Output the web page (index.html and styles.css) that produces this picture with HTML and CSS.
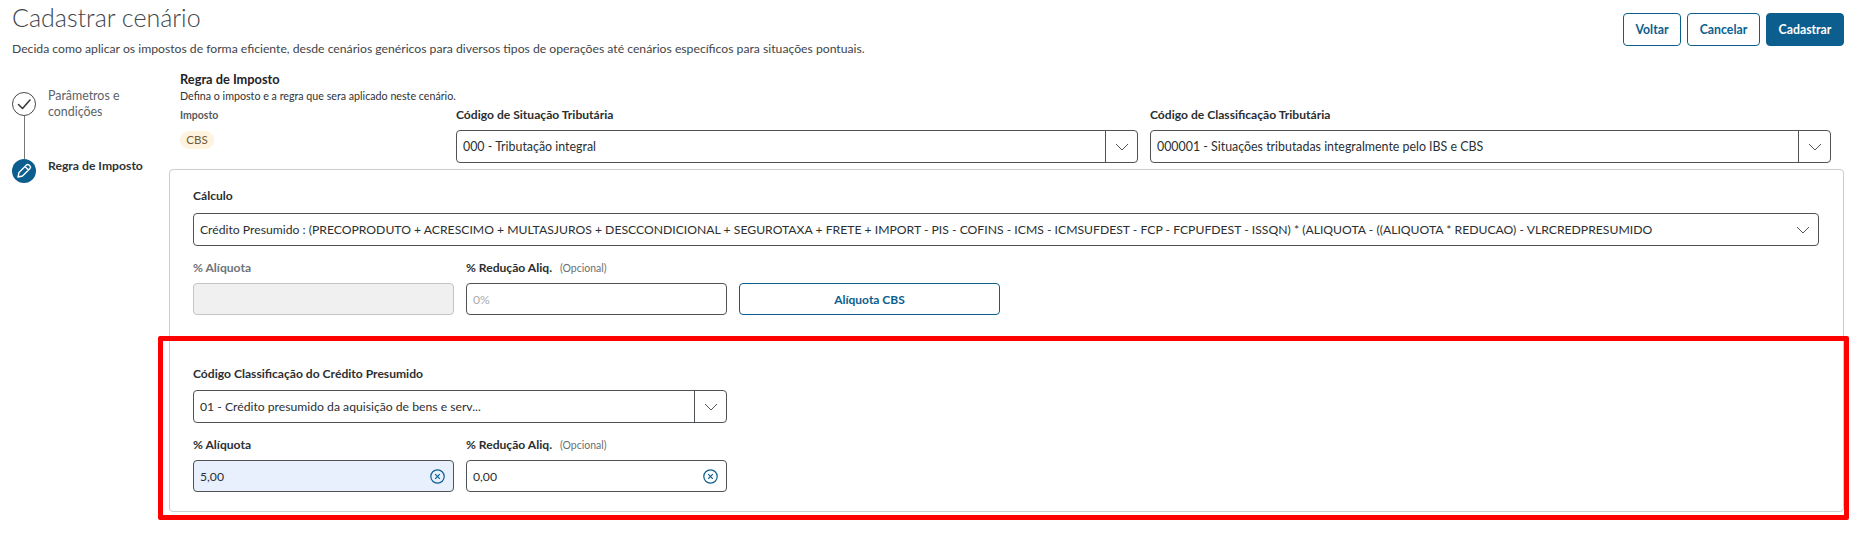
FILE: index.html
```html
<!DOCTYPE html>
<html lang="pt-BR">
<head>
<meta charset="utf-8">
<title>Cadastrar cenário</title>
<link rel="stylesheet" href="styles.css">
</head>
<body>
<header class="page-head">
  <div class="head-text">
    <h1 class="title">Cadastrar cenário</h1>
    <p class="subtitle">Decida como aplicar os impostos de forma eficiente, desde cenários genéricos para diversos tipos de operações até cenários específicos para situações pontuais.</p>
  </div>
  <div class="actions">
    <button class="btn btn-voltar">Voltar</button>
    <button class="btn btn-cancelar">Cancelar</button>
    <button class="btn btn-primary">Cadastrar</button>
  </div>
</header>
<div class="content">
  <nav class="stepper">
    <div class="step step-done">
      <div class="step-rail">
        <span class="step-circle">
          <svg width="24" height="24" viewBox="0 0 24 24"><circle cx="12" cy="12" r="11.5" fill="none" stroke="#4a4a4a"/><path d="M6.5 12.5l4 4 7.5-8.5" fill="none" stroke="#3a3a3a" stroke-width="1.6" stroke-linecap="round" stroke-linejoin="round"/></svg>
        </span>
        <span class="step-line"></span>
      </div>
      <span class="step-label">Parâmetros e condições</span>
    </div>
    <div class="step step-active">
      <div class="step-rail">
        <span class="step-circle">
          <svg width="24" height="24" viewBox="0 0 24 24"><circle cx="12" cy="12" r="12" fill="#0b5e8e"/><path d="M6 18l1-4.5 7.5-7.5a1.7 1.7 0 0 1 2.4 0l1.1 1.1a1.7 1.7 0 0 1 0 2.4L10.5 17z M13 7.5l3.5 3.5" fill="none" stroke="#fff" stroke-width="1.4" stroke-linejoin="round"/></svg>
        </span>
      </div>
      <span class="step-label">Regra de Imposto</span>
    </div>
  </nav>
  <main class="main">
    <h2 class="section-title">Regra de Imposto</h2>
    <p class="section-desc">Defina o imposto e a regra que sera aplicado neste cenário.</p>
    <div class="top-row">
      <div class="tax-col">
        <span class="tax-label">Imposto</span>
        <span class="badge">CBS</span>
      </div>
      <div class="field">
        <label class="label label-strong">Código de Situação Tributária</label>
        <div class="select">
          <span class="select-value value-top">000 - Tributação integral</span>
          <span class="select-arrow"><svg width="16" height="16" viewBox="0 0 16 16"><path d="M2 5l6 6 6-6" fill="none" stroke="#555" stroke-width="1"/></svg></span>
        </div>
      </div>
      <div class="field">
        <label class="label label-strong">Código de Classificação Tributária</label>
        <div class="select">
          <span class="select-value value-top">000001 - Situações tributadas integralmente pelo IBS e CBS</span>
          <span class="select-arrow"><svg width="16" height="16" viewBox="0 0 16 16"><path d="M2 5l6 6 6-6" fill="none" stroke="#555" stroke-width="1"/></svg></span>
        </div>
      </div>
    </div>
    <section class="panel">
      <label class="label label-strong">Cálculo</label>
      <div class="select select-formula">
        <span class="select-value">Crédito Presumido : (PRECOPRODUTO + ACRESCIMO + MULTASJUROS + DESCCONDICIONAL + SEGUROTAXA + FRETE + IMPORT - PIS - COFINS - ICMS - ICMSUFDEST - FCP - FCPUFDEST - ISSQN) * (ALIQUOTA - ((ALIQUOTA * REDUCAO) - VLRCREDPRESUMIDO</span>
        <span class="formula-arrow"><svg width="16" height="16" viewBox="0 0 16 16"><path d="M2 5l6 6 6-6" fill="none" stroke="#555" stroke-width="1"/></svg></span>
      </div>
      <div class="rate-grid rate-grid-a">
        <div class="rate-field">
          <label class="label label-muted">% Alíquota</label>
          <div class="input input-disabled"></div>
        </div>
        <div class="rate-field">
          <label class="label label-strong">% Redução Aliq. <small class="optional">(Opcional)</small></label>
          <div class="input"><span class="placeholder">0%</span></div>
        </div>
        <button class="btn-rate">Alíquota CBS</button>
      </div>
      <div class="credit">
        <label class="label label-strong">Código Classificação do Crédito Presumido</label>
        <div class="select select-credit">
          <span class="select-value">01 - Crédito presumido da aquisição de bens e serv...</span>
          <span class="select-arrow"><svg width="16" height="16" viewBox="0 0 16 16"><path d="M2 5l6 6 6-6" fill="none" stroke="#555" stroke-width="1"/></svg></span>
        </div>
        <div class="rate-grid rate-grid-b">
          <div class="rate-field">
            <label class="label label-strong">% Alíquota</label>
            <div class="input input-filled">
              <span class="input-value">5,00</span>
              <svg class="clear" width="15" height="15" viewBox="0 0 15 15"><circle cx="7.5" cy="7.5" r="6.7" fill="none" stroke="#0b5e8e" stroke-width="1.2"/><path d="M5.2 5.2l4.6 4.6M9.8 5.2l-4.6 4.6" stroke="#0b5e8e" stroke-width="1.2"/></svg>
            </div>
          </div>
          <div class="rate-field">
            <label class="label label-strong">% Redução Aliq. <small class="optional">(Opcional)</small></label>
            <div class="input">
              <span class="input-value">0,00</span>
              <svg class="clear" width="15" height="15" viewBox="0 0 15 15"><circle cx="7.5" cy="7.5" r="6.7" fill="none" stroke="#0b5e8e" stroke-width="1.2"/><path d="M5.2 5.2l4.6 4.6M9.8 5.2l-4.6 4.6" stroke="#0b5e8e" stroke-width="1.2"/></svg>
            </div>
          </div>
        </div>
      </div>
    </section>
  </main>
</div>
<div class="highlight"></div>
</body>
</html>
```

FILE: styles.css
```css
* { box-sizing: border-box; }
html, body { margin: 0; padding: 0; }
body {
  position: relative;
  width: 1849px;
  height: 545px;
  overflow: hidden;
  background: #fff;
  color: #1f2326;
  font-family: Lato, "Open Sans", sans-serif;
  font-size: 12px;
}
.page-head {
  display: flex;
  justify-content: space-between;
  align-items: flex-start;
  height: 70px;
  padding: 0 5px 0 12px;
}
.title {
  margin: 0;
  font-size: 25px;
  line-height: 35px;
  font-weight: 300;
  color: #3d464c;
}
.subtitle {
  margin: 6px 0 0;
  font-size: 12.2px;
  line-height: 16px;
  color: #3f4448;
}
.actions { display: flex; gap: 6px; padding-top: 13px; }
.btn {
  height: 33px;
  padding: 0;
  border: 1px solid #0b5e8e;
  border-radius: 4px;
  background: #fff;
  color: #0b5e8e;
  font: 700 12.3px Lato, sans-serif;
}
.btn-voltar { width: 58px; }
.btn-cancelar { width: 73px; }
.btn-primary { width: 78px; background: #0b5e8e; color: #fff; font-weight: 700; }
.content { display: flex; }
.stepper { width: 180px; flex: none; padding: 22px 0 0 12px; }
.step { display: flex; gap: 12px; }
.step-rail { display: flex; flex-direction: column; align-items: center; width: 24px; }
.step-circle { display: block; width: 24px; height: 24px; }
.step-line { display: block; width: 1px; height: 43px; background: #777; }
.step-label { width: 80px; font-size: 12.4px; line-height: 16px; color: #5c6266; margin-top: -4px; }
.step-active .step-label { color: #2f3336; font-size: 12.2px; font-weight: 700; margin-top: -1px; white-space: nowrap; }
.main { flex: 1; min-width: 0; padding-right: 5px; }
.section-title { margin: 0; font-size: 12.8px; line-height: 18px; font-weight: 700; color: #1f2326; }
.section-desc { margin: 0 0 2px; font-size: 10.7px; line-height: 16px; color: #2f3336; }
.top-row { display: grid; grid-template-columns: 276px 682px 693px; }
.tax-col { display: flex; flex-direction: column; align-items: flex-start; }
.tax-label { font-size: 10.5px; font-weight: 700; line-height: 18px; color: #565b5f; }
.badge {
  margin-top: 7px;
  width: 34px;
  height: 18px;
  border-radius: 9px;
  background: #fdf3df;
  color: #6f5a33;
  font-size: 11.5px;
  line-height: 18px;
  text-align: center;
}
.top-row .field { display: flex; flex-direction: column; }
.top-row .field + .field { margin-left: 12px; }
.label { display: block; font-size: 12.1px; line-height: 18px; }
.label-strong { font-weight: 700; color: #2b2f32; }
.label-muted { font-weight: 700; color: #6f7478; }
.optional { font-size: 10.5px; font-weight: 400; color: #6a6f73; margin-left: 5px; }
.select {
  display: flex;
  align-items: center;
  height: 33px;
  margin-top: 6px;
  border: 1px solid #4f5356;
  border-radius: 4px;
  background: #fff;
}
.select-value {
  flex: 1;
  padding-left: 6px;
  font-size: 12.2px;
  white-space: nowrap;
  overflow: hidden;
  color: #2b2f32;
}
.value-top { font-size: 12.4px; }
.select-arrow {
  display: flex;
  align-items: center;
  justify-content: center;
  flex: none;
  width: 32px;
  align-self: stretch;
  border-left: 1px solid #4f5356;
}
.formula-arrow { display: flex; flex: none; width: 23px; }
.panel {
  margin-top: 6px;
  margin-left: -11px;
  height: 343px;
  padding: 17px 24px 0 23px;
  border: 1px solid #ccc;
  border-radius: 4px;
}
.select-formula { margin-top: 8px; width: 1626px; }
.rate-grid { display: flex; gap: 12px; }
.rate-grid-a { margin-top: 13px; align-items: flex-end; }
.rate-grid-b { margin-top: 13px; }
.rate-field { width: 261px; }
.input {
  display: flex;
  align-items: center;
  justify-content: space-between;
  height: 32px;
  margin-top: 6px;
  padding: 0 8px 0 6px;
  border: 1px solid #4f5356;
  border-radius: 4px;
  background: #fff;
}
.input-disabled { background: #f0f0f0; border-color: #c4c4c4; }
.input-filled { background: #e8f0fe; }
.placeholder { font-size: 12.2px; color: #a9adb0; }
.input-value { font-size: 12.2px; color: #2b2f32; }
.clear { flex: none; }
.btn-rate {
  width: 261px;
  height: 32px;
  padding: 0;
  border: 1px solid #0b5e8e;
  border-radius: 4px;
  background: #fff;
  color: #0b5e8e;
  font: 700 12px Lato, sans-serif;
}
.credit { margin-top: 50px; width: 534px; }
.select-credit { margin-top: 7px; }
.highlight {
  position: absolute;
  left: 158px;
  top: 336px;
  width: 1691px;
  height: 184px;
  border: 5px solid #f00;
  border-radius: 2px;
  pointer-events: none;
}
```
